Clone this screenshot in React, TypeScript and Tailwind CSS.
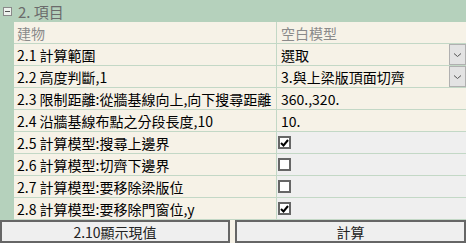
import React from 'react';

type Row =
  | { label: string; kind: 'text'; value: string; muted?: boolean }
  | { label: string; kind: 'select'; value: string }
  | { label: string; kind: 'check'; checked: boolean };

const ROWS: Row[] = [
  { label: '建物', kind: 'text', value: '空白模型', muted: true },
  { label: '2.1 計算範圍', kind: 'select', value: '選取' },
  { label: '2.2 高度判斷,1', kind: 'select', value: '3.與上梁版頂面切齊' },
  { label: '2.3 限制距離:從牆基線向上,向下搜尋距離', kind: 'text', value: '360.,320.' },
  { label: '2.4 沿牆基線布點之分段長度,10', kind: 'text', value: '10.' },
  { label: '2.5 計算模型:搜尋上邊界', kind: 'check', checked: true },
  { label: '2.6 計算模型:切齊下邊界', kind: 'check', checked: false },
  { label: '2.7 計算模型:要移除梁版位', kind: 'check', checked: false },
  { label: '2.8 計算模型:要移除門窗位,y', kind: 'check', checked: true },
];

const FONT = { fontFamily: '"Noto Sans CJK TC", "Liberation Sans", sans-serif' };

function Chevron() {
  return (
    <svg width="9" height="6" viewBox="0 0 9 6" fill="none">
      <path d="M1 1.5 L4.5 4.5 L8 1.5" stroke="#555" strokeWidth="1" />
    </svg>
  );
}

function Check({ checked }: { checked: boolean }) {
  return (
    <div className="w-[13px] h-[13px] border-2 border-[#666] bg-white flex items-center justify-center">
      {checked && (
        <svg width="9" height="8" viewBox="0 0 9 8">
          <path d="M1 4 L3.5 6.5 L8 1" stroke="#000" strokeWidth="2" fill="none" />
        </svg>
      )}
    </div>
  );
}

export default function App() {
  return (
    <div className="w-[466px] h-[243px] bg-[#b5d1bc] text-[14px] leading-none overflow-hidden" style={FONT}>
      {/* group header */}
      <div className="h-[22px] flex items-center">
        <div className="w-[14px] flex justify-center">
          <div className="w-[9px] h-[9px] border border-[#8a8a8a] bg-[#eef2ee] flex items-center justify-center">
            <div className="w-[5px] h-px bg-[#555]" />
          </div>
        </div>
        <span className="ml-[4px] text-[15px] text-[#6b6b6b]">2. 項目</span>
      </div>

      {/* property grid */}
      <div className="ml-[14px] flex flex-col">
        {ROWS.map((r, i) => (
          <div key={i} className="h-[22px] flex border-b border-[#c3d8c6]">
            <div
              className={`w-[263px] shrink-0 bg-[#f6f2e7] border-r border-[#c3d8c6] pl-[3px] flex items-center whitespace-nowrap overflow-hidden ${
                r.kind === 'text' && r.muted ? 'text-[#8a8a8a]' : 'text-black'
              }`}
            >
              {r.label}
            </div>
            {r.kind === 'check' ? (
              <div className="flex-1 bg-[#efefef] flex items-center pl-[1px]">
                <Check checked={r.checked} />
              </div>
            ) : r.kind === 'select' ? (
              <div className="flex-1 bg-[#f6f2e7] flex items-center">
                <span className="pl-[4px] flex-1 whitespace-nowrap">{r.value}</span>
                <div className="w-[17px] h-[21px] bg-[#e3e3e3] border border-[#b0b0b0] flex items-center justify-center">
                  <Chevron />
                </div>
              </div>
            ) : (
              <div
                className={`flex-1 bg-[#f6f2e7] flex items-center pl-[4px] whitespace-nowrap ${
                  r.muted ? 'text-[#8a8a8a]' : 'text-black'
                }`}
              >
                {r.value}
              </div>
            )}
          </div>
        ))}
      </div>

      {/* buttons */}
      <div className="flex h-[23px] gap-[5px] bg-[#f6f2e7]">
        <button className="w-[230px] h-[23px] bg-[#efefef] border-2 border-[#666] text-[14px] text-[#222]" style={FONT}>
          2.10顯示現值
        </button>
        <button className="flex-1 h-[23px] bg-[#efefef] border-2 border-[#666] text-[14px] text-[#222]" style={FONT}>
          計算
        </button>
      </div>
    </div>
  );
}
